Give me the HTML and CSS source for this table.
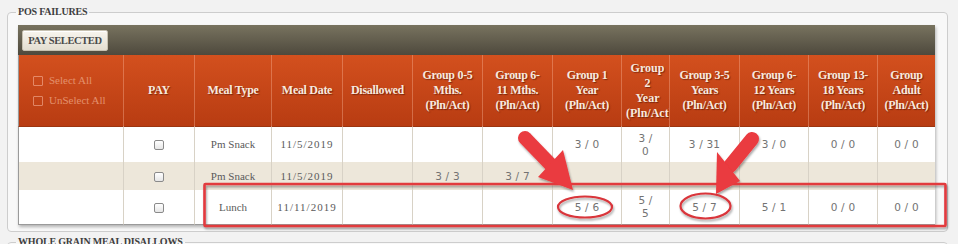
FILE: index.html
```html
<!DOCTYPE html>
<html lang="en">
<head>
<meta charset="utf-8">
<title>POS Failures</title>
<link rel="stylesheet" href="styles.css">
</head>
<body>
<div class="screen">
  <fieldset class="group">
    <legend>POS FAILURES</legend>
    <div class="grid-wrap">
      <div class="toolbar"><button class="btn" type="button">PAY SELECTED</button></div>
      <table class="grid">
        <colgroup>
          <col class="w106"><col class="w71"><col class="w77"><col class="w71"><col class="w70"><col class="w70"><col class="w70"><col class="w69"><col class="w48"><col class="w70"><col class="w69"><col class="w69"><col class="w57">
        </colgroup>
        <thead>
          <tr class="head">
            <th class="sel">
              <label class="sel-item"><span class="hcb"></span>Select All</label>
              <label class="sel-item"><span class="hcb"></span>UnSelect All</label>
            </th>
            <th>PAY</th>
            <th>Meal Type</th>
            <th>Meal Date</th>
            <th>Disallowed</th>
            <th>Group 0-5<br>Mths.<br>(Pln/Act)</th>
            <th>Group 6-<br>11 Mths.<br>(Pln/Act)</th>
            <th>Group 1<br>Year<br>(Pln/Act)</th>
            <th class="narrow">Group<br>2<br>Year<br>(Pln/Act)</th>
            <th>Group 3-5<br>Years<br>(Pln/Act)</th>
            <th>Group 6-<br>12 Years<br>(Pln/Act)</th>
            <th>Group 13-<br>18 Years<br>(Pln/Act)</th>
            <th class="last">Group<br>Adult<br>(Pln/Act)</th>
          </tr>
        </thead>
        <tbody>
          <tr class="r1">
            <td class="first"></td>
            <td><span class="cb"></span></td>
            <td>Pm Snack</td>
            <td class="date">11/5/2019</td>
            <td></td>
            <td></td>
            <td></td>
            <td class="n">3 / 0</td>
            <td class="n">3 /<br>0</td>
            <td class="n">3 / 31</td>
            <td class="n">3 / 0</td>
            <td class="n">0 / 0</td>
            <td class="n last">0 / 0</td>
          </tr>
          <tr class="r2">
            <td class="first"></td>
            <td><span class="cb"></span></td>
            <td>Pm Snack</td>
            <td class="date">11/5/2019</td>
            <td></td>
            <td class="n">3 / 3</td>
            <td class="n">3 / 7</td>
            <td></td>
            <td></td>
            <td></td>
            <td></td>
            <td></td>
            <td class="last"></td>
          </tr>
          <tr class="r3">
            <td class="first"></td>
            <td><span class="cb"></span></td>
            <td>Lunch</td>
            <td class="date">11/11/2019</td>
            <td></td>
            <td></td>
            <td></td>
            <td class="n">5 / 6</td>
            <td class="n">5 /<br>5</td>
            <td class="n">5 / 7</td>
            <td class="n">5 / 1</td>
            <td class="n">0 / 0</td>
            <td class="n last">0 / 0</td>
          </tr>
        </tbody>
      </table>
    </div>
  </fieldset>
  <fieldset class="group next">
    <legend>WHOLE GRAIN MEAL DISALLOWS</legend>
  </fieldset>

  <svg class="marks" width="958" height="244" viewBox="0 0 958 244" aria-hidden="true">
    <defs>
      <filter id="sh" x="-20%" y="-20%" width="140%" height="160%">
        <feDropShadow dx="1" dy="2" stdDeviation="1.3" flood-color="#000" flood-opacity="0.35"/>
      </filter>
    </defs>
    <g filter="url(#sh)">
      <rect x="204.5" y="184" width="741" height="42" rx="1" fill="none" stroke="#e23a3e" stroke-width="2.6"/>
      <ellipse cx="585" cy="207" rx="27" ry="10.5" fill="none" stroke="#d9363b" stroke-width="2.2"/>
      <ellipse cx="705.5" cy="206" rx="25" ry="12.5" fill="none" stroke="#d9363b" stroke-width="2.2"/>
      <line x1="525" y1="138" x2="552" y2="166" stroke="#ea3a3f" stroke-width="14" stroke-linecap="round"/>
      <polygon points="563,150 573,190 538,177" fill="#ea3a3f"/>
      <line x1="752" y1="139" x2="730" y2="166" stroke="#ea3a3f" stroke-width="14" stroke-linecap="round"/>
      <polygon points="717,152 716,194 740,181" fill="#ea3a3f"/>
    </g>
  </svg>
</div>
</body>
</html>
```
FILE: styles.css
```css
* { box-sizing: border-box; }

html, body {
  margin: 0;
  background: #f2f2f2;
}

body {
  width: 958px;
  height: 244px;
  overflow: hidden;
  font-family: "Liberation Serif", serif;
}

.screen {
  position: relative;
  height: 244px;
  overflow: hidden;
  padding: 0 10px 0 7px;
}

.group {
  margin: 6px 0 0;
  padding: 7px 12px 6px 10px;
  border: 1px solid #cdcdcd;
  border-radius: 4px;
  background: #f8f8f8;
  min-width: 0;
}

.group legend {
  padding: 0 2px;
  margin-left: -2px;
  font-size: 10px;
  line-height: 12px;
  font-weight: bold;
  letter-spacing: -0.2px;
  color: #3f3f3f;
}

.group.next {
  margin-top: 4px;
  height: 20px;
}

.grid-wrap {
  width: 917px;
  box-shadow: 1px 2px 3px rgba(0, 0, 0, 0.28);
}

.toolbar {
  height: 30px;
  padding: 5px 4px;
  background: linear-gradient(#78735f, #4e493d);
  display: flex;
  align-items: flex-start;
}

.btn {
  width: 86px;
  height: 21px;
  padding: 0;
  border: 1px solid #c7c1b1;
  border-radius: 2px;
  background: linear-gradient(#f8f5ee, #e3ded1);
  box-shadow: inset 0 1px 0 #fff;
  font-family: "Liberation Serif", serif;
  font-size: 10.5px;
  font-weight: bold;
  letter-spacing: -0.4px;
  color: #4a4a4a;
}

.grid {
  width: 917px;
  table-layout: fixed;
  border-collapse: separate;
  border-spacing: 0;
  background: #fff;
}

.w106 { width: 106px; }
.w77 { width: 77px; }
.w71 { width: 71px; }
.w70 { width: 70px; }
.w69 { width: 69px; }
.w57 { width: 57px; }
.w48 { width: 48px; }

.head th {
  height: 72px;
  padding: 0 2px;
  overflow: hidden;
  white-space: nowrap;
  vertical-align: middle;
  text-align: center;
  background: linear-gradient(#d3501e, #b83c12);
  border-right: 1px solid rgba(255, 196, 168, 0.35);
  border-bottom: 1px solid #9c3510;
  color: #f7e9df;
  font-size: 12px;
  line-height: 15px;
  font-weight: bold;
  letter-spacing: -0.3px;
  text-shadow: 1px 1px 1px rgba(70, 15, 0, 0.55);
}

.head th.narrow {
  padding: 0 0 0 4px;
  letter-spacing: 0;
}

.head th.last { border-right: none; }

.head th.sel {
  text-align: left;
  padding-left: 14px;
  border-left: 1px solid #9a9a9a;
}

.sel-item {
  display: flex;
  align-items: center;
  gap: 6px;
  height: 13px;
  margin: 7px 0;
  font-size: 11px;
  font-weight: normal;
  letter-spacing: 0;
  color: #e3916d;
  text-shadow: none;
}

.hcb {
  width: 10px;
  height: 10px;
  border: 1px solid rgba(255, 200, 180, 0.5);
  border-radius: 1px;
}

tbody td {
  border-right: 1px solid #d8d2c6;
  text-align: center;
  vertical-align: middle;
  color: #5a5a5a;
  font-size: 11px;
  line-height: 13px;
  padding: 0 2px;
  white-space: nowrap;
}

tbody td.last { border-right: none; }
tbody td.first { border-left: 1px solid #9a9a9a; }

.r1 td { height: 35px; }
.r2 td { height: 28px; background: #ede7da; }
.r3 td { height: 35px; border-bottom: 1px solid #9a9a9a; }

td.date {
  letter-spacing: 1px;
  overflow: visible;
}

td.n {
  font-family: "DejaVu Sans", sans-serif;
  font-size: 10.5px;
  letter-spacing: 0.2px;
  color: #737373;
}

.cb {
  display: inline-block;
  width: 10px;
  height: 10px;
  vertical-align: middle;
  border: 1px solid #8a8a8a;
  border-radius: 2px;
  background: linear-gradient(#fff, #e6e6e6);
}

.marks {
  position: absolute;
  top: 0;
  left: 0;
  pointer-events: none;
}
```
